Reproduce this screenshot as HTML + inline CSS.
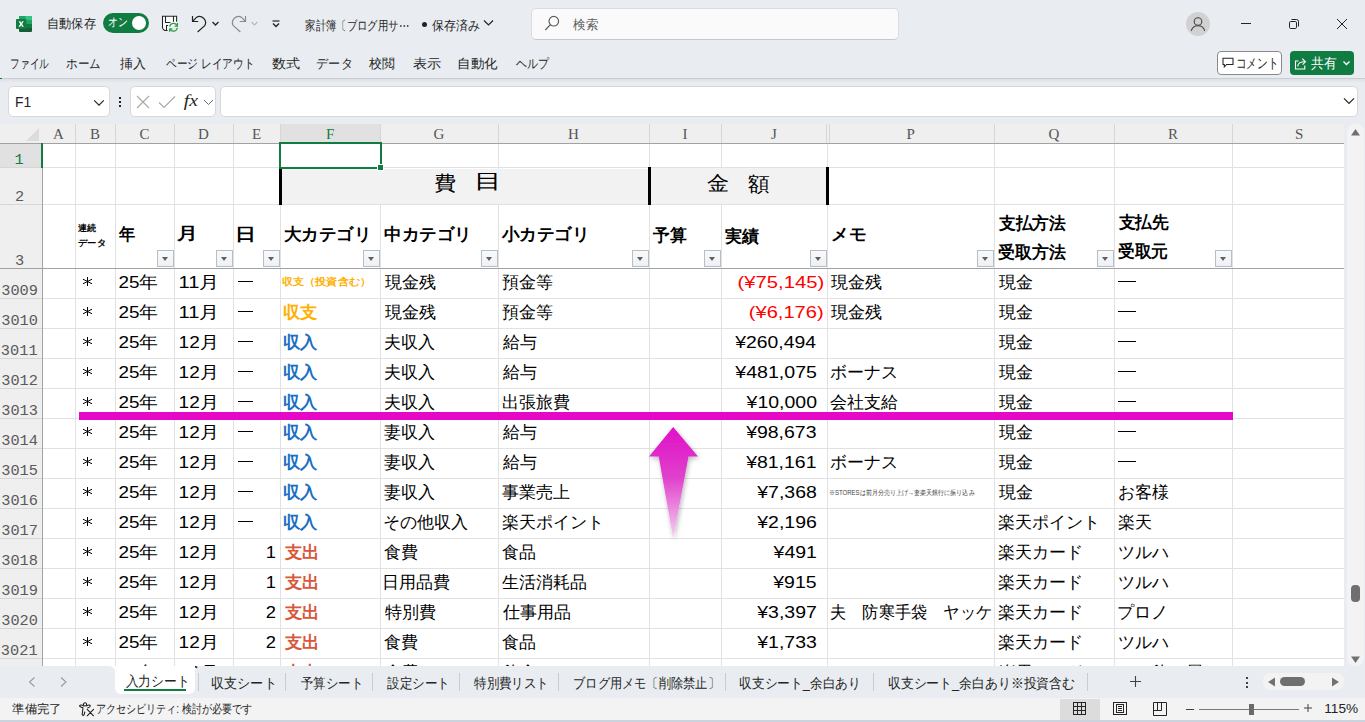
<!DOCTYPE html>
<html lang="ja">
<head>
<meta charset="utf-8">
<title>Excel</title>
<style>
*{box-sizing:border-box}
html,body{margin:0;padding:0}
body{width:1365px;height:722px;overflow:hidden;position:relative;background:#e9edf1;font-family:"Liberation Sans",sans-serif;color:#242424}
.a{position:absolute}
svg text{font-family:"Liberation Sans",sans-serif;white-space:pre}
.fb{position:absolute;top:250px;width:17px;height:17px;background:linear-gradient(#f8f9fb,#eef1f4);border:1px solid #b6bec8}
.fb:after{content:"";position:absolute;left:4px;top:6px;border-left:3.5px solid transparent;border-right:3.5px solid transparent;border-top:4px solid #606060}
</style>
</head>
<body>
<svg class="a" style="left:16px;top:16px" width="16" height="16" viewBox="0 0 16 16">
  <rect x="3" y="0" width="13" height="16" rx="1" fill="#185c37"/>
  <rect x="3" y="0" width="13" height="4" fill="#21a366"/>
  <rect x="9.5" y="0" width="6.5" height="4" fill="#33c481"/>
  <rect x="3" y="4" width="13" height="4" fill="#107c41"/>
  <rect x="9.5" y="4" width="6.5" height="4" fill="#21a366"/>
  <rect x="3" y="8" width="13" height="4" fill="#185c37"/>
  <rect x="9.5" y="8" width="6.5" height="4" fill="#107c41"/>
  <rect x="0" y="3" width="10.3" height="10" rx="0.8" fill="#107c41"/>
  <path d="M2.6 5.2 L4.3 5.2 L5.2 6.9 L6.1 5.2 L7.7 5.2 L6.1 8 L7.8 10.8 L6.1 10.8 L5.1 9.1 L4.2 10.8 L2.5 10.8 L4.3 8 Z" fill="#fff"/>
</svg>
<div class="a" style="left:103px;top:13px;width:46px;height:20px;border-radius:10px;background:#107c41"></div>
<div class="a" style="left:132px;top:16px;width:14px;height:14px;border-radius:7px;background:#fff"></div>
<svg class="a" style="left:161px;top:15px" width="18" height="18" viewBox="0 0 18 18" fill="none">
  <path d="M1.5 1.3 H15.6 V8 L8 15.5 H3.6 L1.5 13.3 Z" fill="#fafafa"/>
  <path d="M1.5 13.3 V1.3 H15.6 V6.8 M1.5 13.3 L3.6 15.5 H6.6 M4.5 1.3 V7.5 H9.4 M12.5 1.3 V6.8 M5.5 15.5 V10.4 H7.2" stroke="#242424" stroke-width="1.05"/>
  <path d="M8.7 11.8 A3.9 3.9 0 0 1 16 10.4 M16.3 12.7 A3.9 3.9 0 0 1 9 14.1" stroke="#2e9e45" stroke-width="1.25"/>
  <path d="M16.4 8.1 V11 H13.6 M8.6 16.7 V13.8 H11.4" stroke="#2e9e45" stroke-width="1.25"/>
</svg>
<svg class="a" style="left:190px;top:15px" width="18" height="18" viewBox="0 0 18 18" fill="none">
  <path d="M2.5 1 V6.5 H8.2" stroke="#242424" stroke-width="1.2"/>
  <path d="M2.5 6.5 L6.2 2.6 A6 6 0 0 1 14.7 10.6 L7.6 17" stroke="#242424" stroke-width="1.2"/>
</svg>
<svg class="a" style="left:211px;top:20px" width="9" height="7" viewBox="0 0 9 7" fill="none"><path d="M1.5 2 L4.5 5 L7.5 2" stroke="#242424" stroke-width="1.3"/></svg>
<svg class="a" style="left:230px;top:15px" width="18" height="18" viewBox="0 0 18 18" fill="none">
  <path d="M15.5 1 V6.5 H9.8" stroke="#8a8a8a" stroke-width="1.2"/>
  <path d="M15.5 6.5 L11.8 2.6 A6 6 0 0 0 3.3 10.6 L10.4 17" stroke="#8a8a8a" stroke-width="1.2"/>
</svg>
<svg class="a" style="left:250px;top:20px" width="9" height="7" viewBox="0 0 9 7" fill="none"><path d="M1.5 2 L4.5 5 L7.5 2" stroke="#b8b8b8" stroke-width="1.1"/></svg>
<svg class="a" style="left:271px;top:19px" width="10" height="10" viewBox="0 0 10 10" fill="none"><path d="M1.5 2 H8.5" stroke="#242424" stroke-width="1.2"/><path d="M2 4.5 L5 7.5 L8 4.5" stroke="#242424" stroke-width="1.4"/></svg>
<div class="a" style="left:422px;top:22px;width:5px;height:5px;border-radius:3px;background:#242424"></div>
<svg class="a" style="left:483px;top:19px" width="11" height="8" viewBox="0 0 11 8" fill="none"><path d="M1 1.5 L5.5 6 L10 1.5" stroke="#242424" stroke-width="1.2"/></svg>
<div class="a" style="left:531px;top:8px;width:368px;height:32px;border-radius:5px;background:#fafafa;border:1px solid #dcdcdc;border-bottom-color:#c8c8c8"></div>
<svg class="a" style="left:544px;top:15px" width="16" height="17" viewBox="0 0 16 17" fill="none"><circle cx="9.8" cy="6.2" r="4.8" stroke="#5c5c5c" stroke-width="1.2"/><path d="M6.4 9.6 L1.3 15" stroke="#5c5c5c" stroke-width="1.3"/></svg>
<div class="a" style="left:1186px;top:12px;width:24px;height:24px;border-radius:12px;background:#d1d1d1"></div>
<svg class="a" style="left:1186px;top:12px" width="24" height="24" viewBox="0 0 24 24" fill="none"><circle cx="12" cy="9.5" r="3.8" stroke="#424242" stroke-width="1.1"/><path d="M5.3 19 C6 15.5 8.5 13.8 12 13.8 C15.5 13.8 18 15.5 18.7 19" stroke="#424242" stroke-width="1.1"/></svg>
<div class="a" style="left:1241px;top:23px;width:10px;height:1px;background:#242424"></div>
<svg class="a" style="left:1288px;top:18px" width="12" height="12" viewBox="0 0 12 12" fill="none"><rect x="1.5" y="3.5" width="7" height="7" rx="1.2" stroke="#242424" stroke-width="1"/><path d="M3.5 1.5 H8.5 A2 2 0 0 1 10.5 3.5 V8.5" stroke="#242424" stroke-width="1"/></svg>
<svg class="a" style="left:1336px;top:18px" width="12" height="12" viewBox="0 0 12 12" fill="none"><path d="M1 1 L11 11 M11 1 L1 11" stroke="#242424" stroke-width="1"/></svg>
<div class="a" style="left:1217px;top:51px;width:65px;height:24px;border-radius:4px;background:#fff;border:1px solid #8a8a8a"></div>
<svg class="a" style="left:1222px;top:57px" width="13" height="12" viewBox="0 0 13 12" fill="none"><path d="M1 1.2 H11 V7.5 H4.6 L2.3 10 V7.5 H1 Z" stroke="#242424" stroke-width="1.05" stroke-linejoin="miter"/></svg>
<div class="a" style="left:1290px;top:51px;width:64px;height:24px;border-radius:4px;background:#107c41"></div>
<svg class="a" style="left:1294px;top:56px" width="14" height="14" viewBox="0 0 14 14" fill="none"><path d="M4.5 5 H1.5 V13 H10.8 V9.5" stroke="#fff" stroke-width="1.1"/><path d="M3.8 10.5 C3.8 7.3 6 5.8 11 5.8" stroke="#fff" stroke-width="1.1"/><path d="M8.3 2.6 L11.4 5.8 L8.6 8.6" stroke="#fff" stroke-width="1.1"/></svg>
<svg class="a" style="left:1342px;top:60px" width="9" height="6" viewBox="0 0 9 6" fill="none"><path d="M1.5 1.5 L4.5 4.5 L7.5 1.5" stroke="#fff" stroke-width="1.4"/></svg>
<div class="a" style="left:0px;top:78px;width:1365px;height:1px;background:#c9ced3"></div>
<div class="a" style="left:0px;top:79px;width:1365px;height:4px;background:linear-gradient(#dde1e5,#e9edf1)"></div>
<div class="a" style="left:0px;top:78px;width:2px;height:1px;background:#107c41"></div>
<div class="a" style="left:8px;top:86px;width:102px;height:31px;border-radius:5px;background:#fff;border:1px solid #d8d8d8"></div>
<svg class="a" style="left:93px;top:99px" width="12" height="8" viewBox="0 0 12 8" fill="none"><path d="M1.2 1.3 L6 6.1 L10.8 1.3" stroke="#242424" stroke-width="1.2"/></svg>
<div class="a" style="left:119px;top:97px;width:2px;height:2px;background:#242424"></div>
<div class="a" style="left:119px;top:101px;width:2px;height:2px;background:#242424"></div>
<div class="a" style="left:119px;top:105px;width:2px;height:2px;background:#242424"></div>
<div class="a" style="left:130px;top:86px;width:86px;height:31px;border-radius:5px;background:#fff;border:1px solid #d8d8d8"></div>
<svg class="a" style="left:136px;top:95px" width="14" height="14" viewBox="0 0 14 14" fill="none"><path d="M1 1 L13 13 M13 1 L1 13" stroke="#a8a8a8" stroke-width="1.1"/></svg>
<svg class="a" style="left:158px;top:95px" width="18" height="14" viewBox="0 0 18 14" fill="none"><path d="M1 7.5 L6 12.5 L17 1.5" stroke="#a8a8a8" stroke-width="1.1"/></svg>
<svg class="a" style="left:203px;top:99px" width="11" height="7" viewBox="0 0 11 7" fill="none"><path d="M1 1 L5.5 5.5 L10 1" stroke="#6a6a6a" stroke-width="1"/></svg>
<div class="a" style="left:220px;top:86px;width:1138px;height:31px;border-radius:5px;background:#fff;border:1px solid #d8d8d8"></div>
<svg class="a" style="left:1343px;top:97px" width="12" height="8" viewBox="0 0 12 8" fill="none"><path d="M1 1.3 L6 6.3 L11 1.3" stroke="#242424" stroke-width="1.2"/></svg>
<svg class="a" style="left:0;top:0" width="1365" height="722" viewBox="0 0 1365 722"><text x="46.86" y="27.70" font-size="13" textLength="48.92" lengthAdjust="spacingAndGlyphs" fill="#242424">自動保存</text>
<text x="108.18" y="26.20" font-size="12" textLength="19.64" lengthAdjust="spacingAndGlyphs" fill="#fff">オン</text>
<text x="305.20" y="29.56" font-size="13" textLength="103.81" lengthAdjust="spacingAndGlyphs" fill="#242424">家計簿〔ブログ用サ⋯</text>
<text x="432.00" y="29.56" font-size="13" textLength="48.02" lengthAdjust="spacingAndGlyphs" fill="#242424">保存済み</text>
<text x="573.00" y="29.00" font-size="13" textLength="25.00" lengthAdjust="spacingAndGlyphs" fill="#5c5c5c">検索</text>
<text x="10.17" y="68.00" font-size="13" textLength="38.89" lengthAdjust="spacingAndGlyphs" fill="#242424">ファイル</text>
<text x="66.20" y="68.00" font-size="13" textLength="34.61" lengthAdjust="spacingAndGlyphs" fill="#242424">ホーム</text>
<text x="119.64" y="68.00" font-size="13" textLength="25.75" lengthAdjust="spacingAndGlyphs" fill="#242424">挿入</text>
<text x="166.00" y="68.00" font-size="13" textLength="88.39" lengthAdjust="spacingAndGlyphs" fill="#242424">ページ レイアウト</text>
<text x="271.66" y="68.00" font-size="13" textLength="28.18" lengthAdjust="spacingAndGlyphs" fill="#242424">数式</text>
<text x="316.35" y="68.00" font-size="13" textLength="36.36" lengthAdjust="spacingAndGlyphs" fill="#242424">データ</text>
<text x="369.36" y="68.00" font-size="13" textLength="25.77" lengthAdjust="spacingAndGlyphs" fill="#242424">校閲</text>
<text x="412.84" y="68.00" font-size="13" textLength="28.17" lengthAdjust="spacingAndGlyphs" fill="#242424">表示</text>
<text x="457.44" y="68.00" font-size="13" textLength="40.52" lengthAdjust="spacingAndGlyphs" fill="#242424">自動化</text>
<text x="516.46" y="68.00" font-size="13" textLength="32.92" lengthAdjust="spacingAndGlyphs" fill="#242424">ヘルプ</text>
<text x="1235.67" y="67.52" font-size="14" textLength="42.70" lengthAdjust="spacingAndGlyphs" fill="#242424">コメント</text>
<text x="1311.20" y="68.00" font-size="14" textLength="25.62" lengthAdjust="spacingAndGlyphs" fill="#fff">共有</text>
<text x="15.00" y="107.30" font-size="14" textLength="16.22" lengthAdjust="spacingAndGlyphs" fill="#242424">F1</text>
<text x="183.70" y="106.00" font-size="17" style="font-family:'Liberation Serif', serif;" font-style="italic" textLength="14.23" lengthAdjust="spacingAndGlyphs" fill="#242424">fx</text></svg>
<div class="a" style="left:0px;top:124px;width:1344px;height:550px;background:#fff"></div>
<div class="a" style="left:0px;top:124px;width:1344px;height:19px;background:#efefef"></div>
<div class="a" style="left:0px;top:143px;width:42px;height:523px;background:#efefef"></div>
<div class="a" style="left:281px;top:124px;width:99px;height:19px;background:#e1e1e1"></div>
<div class="a" style="left:0px;top:144px;width:42px;height:23px;background:#e1e1e1"></div>
<svg class="a" style="left:25px;top:128px" width="14" height="13" viewBox="0 0 14 13"><path d="M14 0 V13 H1 Z" fill="#dcdcdc"/></svg>
<div class="a" style="left:75px;top:124px;width:1px;height:19px;background:#d6d6d6"></div>
<div class="a" style="left:75px;top:144px;width:1px;height:522px;background:#e1e1e1"></div>
<div class="a" style="left:115px;top:124px;width:1px;height:19px;background:#d6d6d6"></div>
<div class="a" style="left:115px;top:144px;width:1px;height:522px;background:#e1e1e1"></div>
<div class="a" style="left:174px;top:124px;width:1px;height:19px;background:#d6d6d6"></div>
<div class="a" style="left:174px;top:144px;width:1px;height:522px;background:#e1e1e1"></div>
<div class="a" style="left:233px;top:124px;width:1px;height:19px;background:#d6d6d6"></div>
<div class="a" style="left:233px;top:144px;width:1px;height:522px;background:#e1e1e1"></div>
<div class="a" style="left:280px;top:124px;width:1px;height:19px;background:#d6d6d6"></div>
<div class="a" style="left:280px;top:144px;width:1px;height:522px;background:#e1e1e1"></div>
<div class="a" style="left:380px;top:124px;width:1px;height:19px;background:#d6d6d6"></div>
<div class="a" style="left:380px;top:144px;width:1px;height:522px;background:#e1e1e1"></div>
<div class="a" style="left:498px;top:124px;width:1px;height:19px;background:#d6d6d6"></div>
<div class="a" style="left:498px;top:144px;width:1px;height:522px;background:#e1e1e1"></div>
<div class="a" style="left:649px;top:124px;width:1px;height:19px;background:#d6d6d6"></div>
<div class="a" style="left:649px;top:144px;width:1px;height:522px;background:#e1e1e1"></div>
<div class="a" style="left:721px;top:124px;width:1px;height:19px;background:#d6d6d6"></div>
<div class="a" style="left:721px;top:144px;width:1px;height:522px;background:#e1e1e1"></div>
<div class="a" style="left:826px;top:124px;width:1px;height:19px;background:#d6d6d6"></div>
<div class="a" style="left:829px;top:124px;width:1px;height:19px;background:#d6d6d6"></div>
<div class="a" style="left:827px;top:144px;width:1px;height:522px;background:#e1e1e1"></div>
<div class="a" style="left:994px;top:124px;width:1px;height:19px;background:#d6d6d6"></div>
<div class="a" style="left:994px;top:144px;width:1px;height:522px;background:#e1e1e1"></div>
<div class="a" style="left:1114px;top:124px;width:1px;height:19px;background:#d6d6d6"></div>
<div class="a" style="left:1114px;top:144px;width:1px;height:522px;background:#e1e1e1"></div>
<div class="a" style="left:1232px;top:124px;width:1px;height:19px;background:#d6d6d6"></div>
<div class="a" style="left:1232px;top:144px;width:1px;height:522px;background:#e1e1e1"></div>
<div class="a" style="left:43px;top:167px;width:1301px;height:1px;background:#e1e1e1"></div>
<div class="a" style="left:0px;top:167px;width:42px;height:1px;background:#d6d6d6"></div>
<div class="a" style="left:43px;top:204px;width:1301px;height:1px;background:#e1e1e1"></div>
<div class="a" style="left:0px;top:204px;width:42px;height:1px;background:#d6d6d6"></div>
<div class="a" style="left:43px;top:268px;width:1301px;height:1px;background:#e1e1e1"></div>
<div class="a" style="left:0px;top:268px;width:42px;height:1px;background:#d6d6d6"></div>
<div class="a" style="left:43px;top:298px;width:1301px;height:1px;background:#e1e1e1"></div>
<div class="a" style="left:0px;top:298px;width:42px;height:1px;background:#d6d6d6"></div>
<div class="a" style="left:43px;top:328px;width:1301px;height:1px;background:#e1e1e1"></div>
<div class="a" style="left:0px;top:328px;width:42px;height:1px;background:#d6d6d6"></div>
<div class="a" style="left:43px;top:358px;width:1301px;height:1px;background:#e1e1e1"></div>
<div class="a" style="left:0px;top:358px;width:42px;height:1px;background:#d6d6d6"></div>
<div class="a" style="left:43px;top:388px;width:1301px;height:1px;background:#e1e1e1"></div>
<div class="a" style="left:0px;top:388px;width:42px;height:1px;background:#d6d6d6"></div>
<div class="a" style="left:43px;top:418px;width:1301px;height:1px;background:#e1e1e1"></div>
<div class="a" style="left:0px;top:418px;width:42px;height:1px;background:#d6d6d6"></div>
<div class="a" style="left:43px;top:448px;width:1301px;height:1px;background:#e1e1e1"></div>
<div class="a" style="left:0px;top:448px;width:42px;height:1px;background:#d6d6d6"></div>
<div class="a" style="left:43px;top:478px;width:1301px;height:1px;background:#e1e1e1"></div>
<div class="a" style="left:0px;top:478px;width:42px;height:1px;background:#d6d6d6"></div>
<div class="a" style="left:43px;top:508px;width:1301px;height:1px;background:#e1e1e1"></div>
<div class="a" style="left:0px;top:508px;width:42px;height:1px;background:#d6d6d6"></div>
<div class="a" style="left:43px;top:538px;width:1301px;height:1px;background:#e1e1e1"></div>
<div class="a" style="left:0px;top:538px;width:42px;height:1px;background:#d6d6d6"></div>
<div class="a" style="left:43px;top:568px;width:1301px;height:1px;background:#e1e1e1"></div>
<div class="a" style="left:0px;top:568px;width:42px;height:1px;background:#d6d6d6"></div>
<div class="a" style="left:43px;top:598px;width:1301px;height:1px;background:#e1e1e1"></div>
<div class="a" style="left:0px;top:598px;width:42px;height:1px;background:#d6d6d6"></div>
<div class="a" style="left:43px;top:628px;width:1301px;height:1px;background:#e1e1e1"></div>
<div class="a" style="left:0px;top:628px;width:42px;height:1px;background:#d6d6d6"></div>
<div class="a" style="left:43px;top:658px;width:1301px;height:1px;background:#e1e1e1"></div>
<div class="a" style="left:0px;top:658px;width:42px;height:1px;background:#d6d6d6"></div>
<div class="a" style="left:0px;top:143px;width:1344px;height:1px;background:#a2a2a2"></div>
<div class="a" style="left:0px;top:268px;width:1344px;height:1px;background:#a2a2a2"></div>
<div class="a" style="left:42px;top:143px;width:1px;height:523px;background:#a2a2a2"></div>
<div class="a" style="left:282px;top:169px;width:366px;height:35px;background:#f2f2f2"></div>
<div class="a" style="left:651px;top:168px;width:175px;height:36px;background:#f2f2f2"></div>
<div class="a" style="left:279px;top:169px;width:3px;height:36px;background:#000"></div>
<div class="a" style="left:648px;top:167px;width:3px;height:38px;background:#000"></div>
<div class="a" style="left:826px;top:167px;width:3px;height:38px;background:#000"></div>
<svg class="a" style="left:0;top:0" width="1365" height="722" viewBox="0 0 1365 722"><text x="53.00" y="138.90" font-size="15" style="font-family:'Liberation Serif', serif;" fill="#555">A</text>
<text x="90.00" y="138.90" font-size="15" style="font-family:'Liberation Serif', serif;" fill="#555">B</text>
<text x="139.50" y="138.90" font-size="15" style="font-family:'Liberation Serif', serif;" fill="#555">C</text>
<text x="198.00" y="138.90" font-size="15" style="font-family:'Liberation Serif', serif;" fill="#555">D</text>
<text x="252.00" y="138.90" font-size="15" style="font-family:'Liberation Serif', serif;" fill="#555">E</text>
<text x="326.00" y="138.90" font-size="15" style="font-family:'Liberation Serif', serif;" fill="#107c41">F</text>
<text x="433.50" y="138.90" font-size="15" style="font-family:'Liberation Serif', serif;" fill="#555">G</text>
<text x="568.00" y="138.90" font-size="15" style="font-family:'Liberation Serif', serif;" fill="#555">H</text>
<text x="682.50" y="138.90" font-size="15" style="font-family:'Liberation Serif', serif;" fill="#555">I</text>
<text x="771.00" y="138.90" font-size="15" style="font-family:'Liberation Serif', serif;" fill="#555">J</text>
<text x="906.50" y="138.90" font-size="15" style="font-family:'Liberation Serif', serif;" fill="#555">P</text>
<text x="1048.50" y="138.90" font-size="15" style="font-family:'Liberation Serif', serif;" fill="#555">Q</text>
<text x="1168.00" y="138.90" font-size="15" style="font-family:'Liberation Serif', serif;" fill="#555">R</text>
<text x="1295.00" y="138.58" font-size="15" style="font-family:'Liberation Serif', serif;" fill="#555">S</text>
<text x="14.61" y="163.60" font-size="15" style="font-family:'Liberation Mono', monospace;" textLength="9.20" lengthAdjust="spacingAndGlyphs" fill="#107c41">1</text>
<text x="15.01" y="200.60" font-size="15" style="font-family:'Liberation Mono', monospace;" textLength="9.20" lengthAdjust="spacingAndGlyphs" fill="#5a5a5a">2</text>
<text x="15.01" y="264.60" font-size="15" style="font-family:'Liberation Mono', monospace;" textLength="9.20" lengthAdjust="spacingAndGlyphs" fill="#5a5a5a">3</text>
<text x="1.24" y="294.60" font-size="15" style="font-family:'Liberation Mono', monospace;" textLength="36.74" lengthAdjust="spacingAndGlyphs" fill="#5a5a5a">3009</text>
<text x="1.24" y="324.60" font-size="15" style="font-family:'Liberation Mono', monospace;" textLength="36.74" lengthAdjust="spacingAndGlyphs" fill="#5a5a5a">3010</text>
<text x="0.84" y="354.60" font-size="15" style="font-family:'Liberation Mono', monospace;" textLength="36.74" lengthAdjust="spacingAndGlyphs" fill="#5a5a5a">3011</text>
<text x="1.24" y="384.60" font-size="15" style="font-family:'Liberation Mono', monospace;" textLength="36.74" lengthAdjust="spacingAndGlyphs" fill="#5a5a5a">3012</text>
<text x="1.24" y="414.60" font-size="15" style="font-family:'Liberation Mono', monospace;" textLength="36.74" lengthAdjust="spacingAndGlyphs" fill="#5a5a5a">3013</text>
<text x="1.24" y="444.60" font-size="15" style="font-family:'Liberation Mono', monospace;" textLength="36.74" lengthAdjust="spacingAndGlyphs" fill="#5a5a5a">3014</text>
<text x="1.24" y="474.60" font-size="15" style="font-family:'Liberation Mono', monospace;" textLength="36.74" lengthAdjust="spacingAndGlyphs" fill="#5a5a5a">3015</text>
<text x="1.24" y="504.60" font-size="15" style="font-family:'Liberation Mono', monospace;" textLength="36.74" lengthAdjust="spacingAndGlyphs" fill="#5a5a5a">3016</text>
<text x="1.24" y="534.60" font-size="15" style="font-family:'Liberation Mono', monospace;" textLength="36.74" lengthAdjust="spacingAndGlyphs" fill="#5a5a5a">3017</text>
<text x="1.24" y="564.60" font-size="15" style="font-family:'Liberation Mono', monospace;" textLength="36.74" lengthAdjust="spacingAndGlyphs" fill="#5a5a5a">3018</text>
<text x="1.24" y="594.60" font-size="15" style="font-family:'Liberation Mono', monospace;" textLength="36.74" lengthAdjust="spacingAndGlyphs" fill="#5a5a5a">3019</text>
<text x="1.24" y="624.60" font-size="15" style="font-family:'Liberation Mono', monospace;" textLength="36.74" lengthAdjust="spacingAndGlyphs" fill="#5a5a5a">3020</text>
<text x="0.84" y="654.60" font-size="15" style="font-family:'Liberation Mono', monospace;" textLength="36.74" lengthAdjust="spacingAndGlyphs" fill="#5a5a5a">3021</text>
<text x="1.24" y="684.60" font-size="15" style="font-family:'Liberation Mono', monospace;" textLength="36.74" lengthAdjust="spacingAndGlyphs" fill="#5a5a5a">3022</text>
<text x="433.79" y="190.40" font-size="20" textLength="22.16" lengthAdjust="spacingAndGlyphs" fill="#000">費</text>
<text x="473.80" y="188.40" font-size="20" textLength="28.01" lengthAdjust="spacingAndGlyphs" fill="#000">目</text>
<text x="706.50" y="190.00" font-size="20" textLength="22.13" lengthAdjust="spacingAndGlyphs" fill="#000">金</text>
<text x="748.40" y="191.00" font-size="20" textLength="21.77" lengthAdjust="spacingAndGlyphs" fill="#000">額</text>
<text x="78.00" y="230.60" font-size="9" font-weight="bold" fill="#000">連続</text>
<text x="78.00" y="245.70" font-size="9" font-weight="bold" textLength="27.85" lengthAdjust="spacingAndGlyphs" fill="#000">データ</text>
<text x="119.20" y="239.80" font-size="17" font-weight="bold" textLength="16.18" lengthAdjust="spacingAndGlyphs" fill="#000">年</text>
<text x="176.60" y="239.00" font-size="17" font-weight="bold" textLength="20.87" lengthAdjust="spacingAndGlyphs" fill="#000">月</text>
<text x="234.73" y="239.70" font-size="17" font-weight="bold" textLength="20.97" lengthAdjust="spacingAndGlyphs" fill="#000">日</text>
<text x="283.70" y="240.20" font-size="17" font-weight="bold" textLength="87.28" lengthAdjust="spacingAndGlyphs" fill="#000">大カテゴリ</text>
<text x="384.10" y="240.20" font-size="17" font-weight="bold" textLength="87.59" lengthAdjust="spacingAndGlyphs" fill="#000">中カテゴリ</text>
<text x="501.60" y="240.20" font-size="17" font-weight="bold" textLength="88.06" lengthAdjust="spacingAndGlyphs" fill="#000">小カテゴリ</text>
<text x="653.30" y="240.50" font-size="17" font-weight="bold" textLength="33.46" lengthAdjust="spacingAndGlyphs" fill="#000">予算</text>
<text x="724.70" y="241.50" font-size="17" font-weight="bold" fill="#000">実績</text>
<text x="830.97" y="239.80" font-size="17" font-weight="bold" textLength="35.10" lengthAdjust="spacingAndGlyphs" fill="#000">メモ</text>
<text x="998.80" y="228.80" font-size="17" font-weight="bold" textLength="66.90" lengthAdjust="spacingAndGlyphs" fill="#000">支払方法</text>
<text x="998.00" y="257.60" font-size="17" font-weight="bold" textLength="67.76" lengthAdjust="spacingAndGlyphs" fill="#000">受取方法</text>
<text x="1118.60" y="228.00" font-size="17" font-weight="bold" textLength="50.19" lengthAdjust="spacingAndGlyphs" fill="#000">支払先</text>
<text x="1117.80" y="256.80" font-size="17" font-weight="bold" textLength="50.21" lengthAdjust="spacingAndGlyphs" fill="#000">受取元</text>
<text x="118.40" y="287.90" font-size="17" textLength="39.87" lengthAdjust="spacingAndGlyphs" fill="#000">25年</text>
<text x="178.52" y="287.90" font-size="17" textLength="40.98" lengthAdjust="spacingAndGlyphs" fill="#000">11月</text>
<text x="281.90" y="285.00" font-size="10" font-weight="bold" textLength="89.03" lengthAdjust="spacingAndGlyphs" fill="#ffb000">収支（投資含む）</text>
<text x="384.70" y="287.90" font-size="17" fill="#000">現金残</text>
<text x="501.70" y="287.90" font-size="17" fill="#000">預金等</text>
<text x="737.50" y="287.90" font-size="17" textLength="86.68" lengthAdjust="spacingAndGlyphs" fill="#ff0000">(¥75,145)</text>
<text x="831.00" y="287.90" font-size="17" fill="#000">現金残</text>
<text x="998.80" y="287.90" font-size="17" fill="#000">現金</text>
<text x="118.40" y="317.90" font-size="17" textLength="39.87" lengthAdjust="spacingAndGlyphs" fill="#000">25年</text>
<text x="178.52" y="317.90" font-size="17" textLength="40.98" lengthAdjust="spacingAndGlyphs" fill="#000">11月</text>
<text x="283.20" y="317.90" font-size="17" font-weight="bold" textLength="34.55" lengthAdjust="spacingAndGlyphs" fill="#ffb000">収支</text>
<text x="384.70" y="317.90" font-size="17" fill="#000">現金残</text>
<text x="501.70" y="317.90" font-size="17" fill="#000">預金等</text>
<text x="748.80" y="317.90" font-size="17" textLength="74.89" lengthAdjust="spacingAndGlyphs" fill="#ff0000">(¥6,176)</text>
<text x="831.00" y="317.90" font-size="17" fill="#000">現金残</text>
<text x="998.80" y="317.90" font-size="17" fill="#000">現金</text>
<text x="118.40" y="347.90" font-size="17" textLength="39.87" lengthAdjust="spacingAndGlyphs" fill="#000">25年</text>
<text x="178.58" y="347.90" font-size="17" textLength="40.16" lengthAdjust="spacingAndGlyphs" fill="#000">12月</text>
<text x="283.20" y="347.90" font-size="17" font-weight="bold" textLength="34.55" lengthAdjust="spacingAndGlyphs" fill="#1a6fc4">収入</text>
<text x="383.70" y="347.90" font-size="17" fill="#000">夫収入</text>
<text x="502.50" y="347.90" font-size="17" fill="#000">給与</text>
<text x="735.30" y="347.90" font-size="17" textLength="80.63" lengthAdjust="spacingAndGlyphs" fill="#000">¥260,494</text>
<text x="998.80" y="347.90" font-size="17" fill="#000">現金</text>
<text x="118.40" y="377.90" font-size="17" textLength="39.87" lengthAdjust="spacingAndGlyphs" fill="#000">25年</text>
<text x="178.58" y="377.90" font-size="17" textLength="40.16" lengthAdjust="spacingAndGlyphs" fill="#000">12月</text>
<text x="283.20" y="377.90" font-size="17" font-weight="bold" textLength="34.55" lengthAdjust="spacingAndGlyphs" fill="#1a6fc4">収入</text>
<text x="383.70" y="377.90" font-size="17" fill="#000">夫収入</text>
<text x="502.50" y="377.90" font-size="17" fill="#000">給与</text>
<text x="735.30" y="377.90" font-size="17" textLength="81.65" lengthAdjust="spacingAndGlyphs" fill="#000">¥481,075</text>
<text x="830.00" y="377.90" font-size="17" fill="#000">ボーナス</text>
<text x="998.80" y="377.90" font-size="17" fill="#000">現金</text>
<text x="118.40" y="407.90" font-size="17" textLength="39.87" lengthAdjust="spacingAndGlyphs" fill="#000">25年</text>
<text x="178.58" y="407.90" font-size="17" textLength="40.16" lengthAdjust="spacingAndGlyphs" fill="#000">12月</text>
<text x="283.20" y="407.90" font-size="17" font-weight="bold" textLength="34.55" lengthAdjust="spacingAndGlyphs" fill="#1a6fc4">収入</text>
<text x="383.70" y="407.90" font-size="17" fill="#000">夫収入</text>
<text x="501.70" y="407.90" font-size="17" fill="#000">出張旅費</text>
<text x="746.61" y="407.90" font-size="17" textLength="70.36" lengthAdjust="spacingAndGlyphs" fill="#000">¥10,000</text>
<text x="830.20" y="407.90" font-size="17" fill="#000">会社支給</text>
<text x="998.80" y="407.90" font-size="17" fill="#000">現金</text>
<text x="118.40" y="437.90" font-size="17" textLength="39.87" lengthAdjust="spacingAndGlyphs" fill="#000">25年</text>
<text x="178.58" y="437.90" font-size="17" textLength="40.16" lengthAdjust="spacingAndGlyphs" fill="#000">12月</text>
<text x="283.20" y="437.90" font-size="17" font-weight="bold" textLength="34.55" lengthAdjust="spacingAndGlyphs" fill="#1a6fc4">収入</text>
<text x="383.90" y="437.90" font-size="17" fill="#000">妻収入</text>
<text x="502.50" y="437.90" font-size="17" fill="#000">給与</text>
<text x="746.15" y="437.90" font-size="17" textLength="70.36" lengthAdjust="spacingAndGlyphs" fill="#000">¥98,673</text>
<text x="998.80" y="437.90" font-size="17" fill="#000">現金</text>
<text x="118.40" y="467.90" font-size="17" textLength="39.87" lengthAdjust="spacingAndGlyphs" fill="#000">25年</text>
<text x="178.58" y="467.90" font-size="17" textLength="40.16" lengthAdjust="spacingAndGlyphs" fill="#000">12月</text>
<text x="283.20" y="467.90" font-size="17" font-weight="bold" textLength="34.55" lengthAdjust="spacingAndGlyphs" fill="#1a6fc4">収入</text>
<text x="383.90" y="467.90" font-size="17" fill="#000">妻収入</text>
<text x="502.50" y="467.90" font-size="17" fill="#000">給与</text>
<text x="746.15" y="467.90" font-size="17" textLength="70.36" lengthAdjust="spacingAndGlyphs" fill="#000">¥81,161</text>
<text x="830.00" y="467.90" font-size="17" fill="#000">ボーナス</text>
<text x="998.80" y="467.90" font-size="17" fill="#000">現金</text>
<text x="118.40" y="497.90" font-size="17" textLength="39.87" lengthAdjust="spacingAndGlyphs" fill="#000">25年</text>
<text x="178.58" y="497.90" font-size="17" textLength="40.16" lengthAdjust="spacingAndGlyphs" fill="#000">12月</text>
<text x="283.20" y="497.90" font-size="17" font-weight="bold" textLength="34.55" lengthAdjust="spacingAndGlyphs" fill="#1a6fc4">収入</text>
<text x="383.90" y="497.90" font-size="17" fill="#000">妻収入</text>
<text x="501.70" y="497.90" font-size="17" fill="#000">事業売上</text>
<text x="757.26" y="497.90" font-size="17" textLength="59.54" lengthAdjust="spacingAndGlyphs" fill="#000">¥7,368</text>
<text x="828.84" y="494.50" font-size="7" textLength="145.73" lengthAdjust="spacingAndGlyphs" fill="#444">※STORESは前月分売り上げ→妻楽天銀行に振り込み</text>
<text x="998.80" y="497.90" font-size="17" fill="#000">現金</text>
<text x="1117.50" y="497.90" font-size="17" fill="#000">お客様</text>
<text x="118.40" y="527.90" font-size="17" textLength="39.87" lengthAdjust="spacingAndGlyphs" fill="#000">25年</text>
<text x="178.58" y="527.90" font-size="17" textLength="40.16" lengthAdjust="spacingAndGlyphs" fill="#000">12月</text>
<text x="283.20" y="527.90" font-size="17" font-weight="bold" textLength="34.55" lengthAdjust="spacingAndGlyphs" fill="#1a6fc4">収入</text>
<text x="382.90" y="527.90" font-size="17" fill="#000">その他収入</text>
<text x="501.70" y="527.90" font-size="17" fill="#000">楽天ポイント</text>
<text x="757.26" y="527.90" font-size="17" textLength="59.54" lengthAdjust="spacingAndGlyphs" fill="#000">¥2,196</text>
<text x="998.00" y="527.90" font-size="17" fill="#000">楽天ポイント</text>
<text x="1117.70" y="527.90" font-size="17" fill="#000">楽天</text>
<text x="118.40" y="557.90" font-size="17" textLength="39.87" lengthAdjust="spacingAndGlyphs" fill="#000">25年</text>
<text x="178.58" y="557.90" font-size="17" textLength="40.16" lengthAdjust="spacingAndGlyphs" fill="#000">12月</text>
<text x="265.68" y="557.90" font-size="17" textLength="10.23" lengthAdjust="spacingAndGlyphs" fill="#000">1</text>
<text x="284.60" y="557.90" font-size="17" font-weight="bold" textLength="34.75" lengthAdjust="spacingAndGlyphs" fill="#d9573a">支出</text>
<text x="383.90" y="557.90" font-size="17" fill="#000">食費</text>
<text x="501.70" y="557.90" font-size="17" fill="#000">食品</text>
<text x="773.63" y="557.90" font-size="17" textLength="43.31" lengthAdjust="spacingAndGlyphs" fill="#000">¥491</text>
<text x="998.00" y="557.90" font-size="17" fill="#000">楽天カード</text>
<text x="1117.50" y="557.90" font-size="17" fill="#000">ツルハ</text>
<text x="118.40" y="587.90" font-size="17" textLength="39.87" lengthAdjust="spacingAndGlyphs" fill="#000">25年</text>
<text x="178.58" y="587.90" font-size="17" textLength="40.16" lengthAdjust="spacingAndGlyphs" fill="#000">12月</text>
<text x="265.68" y="587.90" font-size="17" textLength="10.23" lengthAdjust="spacingAndGlyphs" fill="#000">1</text>
<text x="284.60" y="587.90" font-size="17" font-weight="bold" textLength="34.75" lengthAdjust="spacingAndGlyphs" fill="#d9573a">支出</text>
<text x="381.90" y="587.90" font-size="17" fill="#000">日用品費</text>
<text x="501.70" y="587.90" font-size="17" fill="#000">生活消耗品</text>
<text x="773.29" y="587.90" font-size="17" textLength="43.31" lengthAdjust="spacingAndGlyphs" fill="#000">¥915</text>
<text x="998.00" y="587.90" font-size="17" fill="#000">楽天カード</text>
<text x="1117.50" y="587.90" font-size="17" fill="#000">ツルハ</text>
<text x="118.40" y="617.90" font-size="17" textLength="39.87" lengthAdjust="spacingAndGlyphs" fill="#000">25年</text>
<text x="178.58" y="617.90" font-size="17" textLength="40.16" lengthAdjust="spacingAndGlyphs" fill="#000">12月</text>
<text x="265.68" y="617.90" font-size="17" textLength="10.23" lengthAdjust="spacingAndGlyphs" fill="#000">2</text>
<text x="284.60" y="617.90" font-size="17" font-weight="bold" textLength="34.75" lengthAdjust="spacingAndGlyphs" fill="#d9573a">支出</text>
<text x="384.70" y="617.90" font-size="17" fill="#000">特別費</text>
<text x="502.50" y="617.90" font-size="17" fill="#000">仕事用品</text>
<text x="757.26" y="617.90" font-size="17" textLength="59.54" lengthAdjust="spacingAndGlyphs" fill="#000">¥3,397</text>
<text x="830.05" y="617.90" font-size="17" textLength="161.95" lengthAdjust="spacingAndGlyphs" fill="#000">夫　防寒手袋　ヤッケ</text>
<text x="998.00" y="617.90" font-size="17" fill="#000">楽天カード</text>
<text x="1116.70" y="617.90" font-size="17" fill="#000">プロノ</text>
<text x="118.40" y="647.90" font-size="17" textLength="39.87" lengthAdjust="spacingAndGlyphs" fill="#000">25年</text>
<text x="178.58" y="647.90" font-size="17" textLength="40.16" lengthAdjust="spacingAndGlyphs" fill="#000">12月</text>
<text x="265.68" y="647.90" font-size="17" textLength="10.23" lengthAdjust="spacingAndGlyphs" fill="#000">2</text>
<text x="284.60" y="647.90" font-size="17" font-weight="bold" textLength="34.75" lengthAdjust="spacingAndGlyphs" fill="#d9573a">支出</text>
<text x="383.90" y="647.90" font-size="17" fill="#000">食費</text>
<text x="501.70" y="647.90" font-size="17" fill="#000">食品</text>
<text x="757.26" y="647.90" font-size="17" textLength="59.54" lengthAdjust="spacingAndGlyphs" fill="#000">¥1,733</text>
<text x="998.00" y="647.90" font-size="17" fill="#000">楽天カード</text>
<text x="1117.50" y="647.90" font-size="17" fill="#000">ツルハ</text>
<text x="119.20" y="677.90" font-size="17" textLength="38.62" lengthAdjust="spacingAndGlyphs" fill="#000">25年</text>
<text x="178.59" y="677.90" font-size="17" textLength="39.85" lengthAdjust="spacingAndGlyphs" fill="#000">12月</text>
<text x="265.68" y="677.90" font-size="17" textLength="10.23" lengthAdjust="spacingAndGlyphs" fill="#000">3</text>
<text x="284.60" y="677.90" font-size="17" font-weight="bold" textLength="34.53" lengthAdjust="spacingAndGlyphs" fill="#d9573a">支出</text>
<text x="384.70" y="677.90" font-size="17" fill="#000">食費</text>
<text x="502.50" y="677.90" font-size="17" fill="#000">飲食</text>
<text x="756.46" y="677.90" font-size="17" textLength="59.54" lengthAdjust="spacingAndGlyphs" fill="#000">¥1,760</text>
<text x="998.80" y="677.90" font-size="17" fill="#000">楽天カード</text>
<text x="1117.50" y="677.90" font-size="17" fill="#000">いい飲み屋</text></svg>
<svg class="a" style="left:82px;top:276px" width="11" height="11" viewBox="0 0 11 11" fill="none" stroke="#000" stroke-width="1"><path d="M5.5 1 V10 M1 3.2 L10 7.8 M1 7.8 L10 3.2"/></svg>
<div class="a" style="left:238px;top:281px;width:15px;height:1px;background:#000"></div>
<div class="a" style="left:1118px;top:281px;width:18px;height:1px;background:#000"></div>
<svg class="a" style="left:82px;top:306px" width="11" height="11" viewBox="0 0 11 11" fill="none" stroke="#000" stroke-width="1"><path d="M5.5 1 V10 M1 3.2 L10 7.8 M1 7.8 L10 3.2"/></svg>
<div class="a" style="left:238px;top:311px;width:15px;height:1px;background:#000"></div>
<div class="a" style="left:1118px;top:311px;width:18px;height:1px;background:#000"></div>
<svg class="a" style="left:82px;top:336px" width="11" height="11" viewBox="0 0 11 11" fill="none" stroke="#000" stroke-width="1"><path d="M5.5 1 V10 M1 3.2 L10 7.8 M1 7.8 L10 3.2"/></svg>
<div class="a" style="left:238px;top:341px;width:15px;height:1px;background:#000"></div>
<div class="a" style="left:1118px;top:341px;width:18px;height:1px;background:#000"></div>
<svg class="a" style="left:82px;top:366px" width="11" height="11" viewBox="0 0 11 11" fill="none" stroke="#000" stroke-width="1"><path d="M5.5 1 V10 M1 3.2 L10 7.8 M1 7.8 L10 3.2"/></svg>
<div class="a" style="left:238px;top:371px;width:15px;height:1px;background:#000"></div>
<div class="a" style="left:1118px;top:371px;width:18px;height:1px;background:#000"></div>
<svg class="a" style="left:82px;top:396px" width="11" height="11" viewBox="0 0 11 11" fill="none" stroke="#000" stroke-width="1"><path d="M5.5 1 V10 M1 3.2 L10 7.8 M1 7.8 L10 3.2"/></svg>
<div class="a" style="left:238px;top:401px;width:15px;height:1px;background:#000"></div>
<div class="a" style="left:1118px;top:401px;width:18px;height:1px;background:#000"></div>
<svg class="a" style="left:82px;top:426px" width="11" height="11" viewBox="0 0 11 11" fill="none" stroke="#000" stroke-width="1"><path d="M5.5 1 V10 M1 3.2 L10 7.8 M1 7.8 L10 3.2"/></svg>
<div class="a" style="left:238px;top:431px;width:15px;height:1px;background:#000"></div>
<div class="a" style="left:1118px;top:431px;width:18px;height:1px;background:#000"></div>
<svg class="a" style="left:82px;top:456px" width="11" height="11" viewBox="0 0 11 11" fill="none" stroke="#000" stroke-width="1"><path d="M5.5 1 V10 M1 3.2 L10 7.8 M1 7.8 L10 3.2"/></svg>
<div class="a" style="left:238px;top:461px;width:15px;height:1px;background:#000"></div>
<div class="a" style="left:1118px;top:461px;width:18px;height:1px;background:#000"></div>
<svg class="a" style="left:82px;top:486px" width="11" height="11" viewBox="0 0 11 11" fill="none" stroke="#000" stroke-width="1"><path d="M5.5 1 V10 M1 3.2 L10 7.8 M1 7.8 L10 3.2"/></svg>
<div class="a" style="left:238px;top:491px;width:15px;height:1px;background:#000"></div>
<svg class="a" style="left:82px;top:516px" width="11" height="11" viewBox="0 0 11 11" fill="none" stroke="#000" stroke-width="1"><path d="M5.5 1 V10 M1 3.2 L10 7.8 M1 7.8 L10 3.2"/></svg>
<div class="a" style="left:238px;top:521px;width:15px;height:1px;background:#000"></div>
<svg class="a" style="left:82px;top:546px" width="11" height="11" viewBox="0 0 11 11" fill="none" stroke="#000" stroke-width="1"><path d="M5.5 1 V10 M1 3.2 L10 7.8 M1 7.8 L10 3.2"/></svg>
<svg class="a" style="left:82px;top:576px" width="11" height="11" viewBox="0 0 11 11" fill="none" stroke="#000" stroke-width="1"><path d="M5.5 1 V10 M1 3.2 L10 7.8 M1 7.8 L10 3.2"/></svg>
<svg class="a" style="left:82px;top:606px" width="11" height="11" viewBox="0 0 11 11" fill="none" stroke="#000" stroke-width="1"><path d="M5.5 1 V10 M1 3.2 L10 7.8 M1 7.8 L10 3.2"/></svg>
<svg class="a" style="left:82px;top:636px" width="11" height="11" viewBox="0 0 11 11" fill="none" stroke="#000" stroke-width="1"><path d="M5.5 1 V10 M1 3.2 L10 7.8 M1 7.8 L10 3.2"/></svg>
<svg class="a" style="left:82px;top:666px" width="11" height="11" viewBox="0 0 11 11" fill="none" stroke="#000" stroke-width="1"><path d="M5.5 1 V10 M1 3.2 L10 7.8 M1 7.8 L10 3.2"/></svg>
<div class="fb" style="left:157px"></div>
<div class="fb" style="left:216px"></div>
<div class="fb" style="left:263px"></div>
<div class="fb" style="left:363px"></div>
<div class="fb" style="left:481px"></div>
<div class="fb" style="left:632px"></div>
<div class="fb" style="left:704px"></div>
<div class="fb" style="left:810px"></div>
<div class="fb" style="left:977px"></div>
<div class="fb" style="left:1097px"></div>
<div class="fb" style="left:1215px"></div>
<div class="a" style="left:41px;top:143px;width:2px;height:25px;background:#107c41"></div>
<div class="a" style="left:279px;top:142px;width:103px;height:27px;border:2px solid #107c41"></div>
<div class="a" style="left:377px;top:164px;width:7px;height:7px;background:#fff"></div>
<div class="a" style="left:378px;top:165px;width:5px;height:5px;background:#107c41"></div>
<div class="a" style="left:79px;top:412px;width:1154px;height:8px;background:#e400c4;opacity:0.97"></div>
<svg class="a" style="left:630px;top:415px" width="90" height="140" viewBox="630 415 90 140">
<defs><linearGradient id="ag" x1="0" y1="0" x2="0" y2="1"><stop offset="0" stop-color="#e010c8"/><stop offset="0.45" stop-color="#e040cc"/><stop offset="1" stop-color="#f6d2ef"/></linearGradient>
<filter id="sh" x="-30%" y="-30%" width="160%" height="160%"><feGaussianBlur in="SourceAlpha" stdDeviation="2.5"/><feOffset dx="1" dy="2"/><feComponentTransfer><feFuncA type="linear" slope="0.3"/></feComponentTransfer><feMerge><feMergeNode/><feMergeNode in="SourceGraphic"/></feMerge></filter></defs>
<path d="M673.2 427 L698 456.4 L688.5 456.4 L673.2 538.6 L658.7 456.4 L649 456.4 Z" fill="url(#ag)" filter="url(#sh)"/>
</svg>
<div class="a" style="left:1344px;top:124px;width:21px;height:542px;background:#e9edf1"></div>
<div class="a" style="left:1347px;top:124px;width:17px;height:542px;border-radius:8px;background:#f3f3f3"></div>
<svg class="a" style="left:1350px;top:128px" width="11" height="9" viewBox="0 0 11 9"><path d="M5.5 1 L10 7.5 H1 Z" fill="#717171"/></svg>
<svg class="a" style="left:1350px;top:655px" width="11" height="9" viewBox="0 0 11 9"><path d="M5.5 8 L10 1.5 H1 Z" fill="#717171"/></svg>
<div class="a" style="left:1351px;top:585px;width:9px;height:17px;border-radius:4px;background:#6f6f6f"></div>
<div class="a" style="left:0;top:666px;width:115px;height:32px;background:#e9edf1;border-top-right-radius:6px"></div>
<div class="a" style="left:195px;top:666px;width:1170px;height:32px;background:#e9edf1;border-top-left-radius:6px"></div>
<div class="a" style="left:115px;top:666px;width:80px;height:32px;background:#e9edf1"></div>
<div class="a" style="left:115px;top:666px;width:80px;height:28px;background:#fff;border-radius:0 0 6px 6px"></div>
<div class="a" style="left:124px;top:689px;width:62px;height:2px;background:#107c41"></div>
<svg class="a" style="left:26px;top:675px" width="44" height="14" viewBox="0 0 44 14" fill="none" stroke="#9a9a9a" stroke-width="1.1"><path d="M8.5 2.5 L3.5 7 L8.5 11.5"/><path d="M35 2.5 L40 7 L35 11.5"/></svg>
<div class="a" style="left:198px;top:673px;width:1px;height:18px;background:#c9cdd2"></div>
<div class="a" style="left:285px;top:673px;width:1px;height:18px;background:#c9cdd2"></div>
<div class="a" style="left:372px;top:673px;width:1px;height:18px;background:#c9cdd2"></div>
<div class="a" style="left:459px;top:673px;width:1px;height:18px;background:#c9cdd2"></div>
<div class="a" style="left:558px;top:673px;width:1px;height:18px;background:#c9cdd2"></div>
<div class="a" style="left:725px;top:673px;width:1px;height:18px;background:#c9cdd2"></div>
<div class="a" style="left:873px;top:673px;width:1px;height:18px;background:#c9cdd2"></div>
<div class="a" style="left:1087px;top:673px;width:1px;height:18px;background:#c9cdd2"></div>
<svg class="a" style="left:1129px;top:675px" width="13" height="13" viewBox="0 0 13 13" fill="none" stroke="#424242" stroke-width="1.1"><path d="M6.5 1 V12 M1 6.5 H12"/></svg>
<div class="a" style="left:1246px;top:677px;width:2px;height:2px;background:#424242"></div>
<div class="a" style="left:1246px;top:682px;width:2px;height:2px;background:#424242"></div>
<div class="a" style="left:1246px;top:686px;width:2px;height:2px;background:#424242"></div>
<div class="a" style="left:1263px;top:673px;width:81px;height:17px;border-radius:8px;background:#f3f3f3"></div>
<svg class="a" style="left:1266px;top:676px" width="76" height="12" viewBox="0 0 76 12"><path d="M9 1.5 V10.5 L2 6 Z" fill="#717171"/><path d="M66 1.5 V10.5 L73 6 Z" fill="#717171"/></svg>
<div class="a" style="left:1280px;top:677px;width:25px;height:9px;border-radius:5px;background:#6f6f6f"></div>
<div class="a" style="left:0;top:698px;width:1365px;height:22px;background:#f3f3f3"></div>
<div class="a" style="left:0;top:720px;width:1365px;height:2px;background:#cad3de"></div>
<div class="a" style="left:1060px;top:699px;width:40px;height:21px;background:#dcdcdc"></div>
<svg class="a" style="left:1072px;top:701px" width="16" height="16" viewBox="0 0 16 16" fill="none" stroke="#242424" stroke-width="1"><rect x="1.5" y="1.5" width="12" height="12"/><path d="M5.5 1.5 V13.5 M9.5 1.5 V13.5 M1.5 5.5 H13.5 M1.5 9.5 H13.5"/></svg>
<svg class="a" style="left:1112px;top:702px" width="16" height="16" viewBox="0 0 16 16" fill="none" stroke="#242424" stroke-width="1"><rect x="1.5" y="0.5" width="13" height="12"/><rect x="4.5" y="2.5" width="7" height="8"/><path d="M6 4.5 H10 M6 6.5 H10 M6 8.5 H10"/></svg>
<svg class="a" style="left:1152px;top:701px" width="16" height="16" viewBox="0 0 16 16" fill="none" stroke="#242424" stroke-width="1"><path d="M1.5 1.5 H14.5 V14.5 H1.5 Z M1.5 9.5 H9.5 V1.5 M5.5 1.5 V9.5"/></svg>
<div class="a" style="left:1186px;top:709px;width:8px;height:1px;background:#424242"></div>
<div class="a" style="left:1199px;top:709px;width:100px;height:1px;background:#7a7a7a"></div>
<div class="a" style="left:1249px;top:704px;width:5px;height:11px;background:#6a6a6a"></div>
<svg class="a" style="left:1303px;top:703px" width="10" height="10" viewBox="0 0 10 10" fill="none" stroke="#424242" stroke-width="1"><path d="M5 1 V9 M1 5 H9"/></svg>
<svg class="a" style="left:78px;top:701px" width="17" height="17" viewBox="0 0 17 17" fill="none" stroke="#1a1a1a" stroke-width="1.05" stroke-linecap="round"><circle cx="7" cy="3.4" r="1.6"/><path d="M5.4 4.9 C4.2 4 1.7 3.6 1.7 5.1 C1.7 6.1 3.3 6.4 4.9 6.7 C4.9 9.2 4.5 11.2 4.2 13 C4 14.7 5.9 14.8 6.2 13.3 L6.8 11"/><path d="M8.6 4.9 C9.8 4 12.3 3.6 12.3 5.1 C12.3 6 11 6.5 9.6 6.9"/><path d="M9.2 8.4 L15.5 14.8 M15.5 8.4 L9.2 14.8"/></svg>
<svg class="a" style="left:0;top:0" width="1365" height="722" viewBox="0 0 1365 722"><text x="125.70" y="685.70" font-size="14" textLength="63.77" lengthAdjust="spacingAndGlyphs" fill="#242424">入力シート</text>
<text x="211.20" y="687.60" font-size="14" textLength="65.46" lengthAdjust="spacingAndGlyphs" fill="#242424">収支シート</text>
<text x="301.00" y="687.60" font-size="14" textLength="62.30" lengthAdjust="spacingAndGlyphs" fill="#242424">予算シート</text>
<text x="387.40" y="687.60" font-size="14" textLength="62.61" lengthAdjust="spacingAndGlyphs" fill="#242424">設定シート</text>
<text x="474.10" y="687.60" font-size="14" textLength="74.73" lengthAdjust="spacingAndGlyphs" fill="#242424">特別費リスト</text>
<text x="573.23" y="687.60" font-size="14" textLength="146.54" lengthAdjust="spacingAndGlyphs" fill="#242424">ブログ用メモ〔削除禁止〕</text>
<text x="739.30" y="687.60" font-size="14" textLength="121.38" lengthAdjust="spacingAndGlyphs" fill="#242424">収支シート_余白あり</text>
<text x="887.80" y="687.60" font-size="14" textLength="187.25" lengthAdjust="spacingAndGlyphs" fill="#242424">収支シート_余白あり※投資含む</text>
<text x="12.30" y="712.60" font-size="12" textLength="49.44" lengthAdjust="spacingAndGlyphs" fill="#242424">準備完了</text>
<text x="95.86" y="712.60" font-size="12" textLength="156.33" lengthAdjust="spacingAndGlyphs" fill="#242424">アクセシビリティ: 検討が必要です</text>
<text x="1324.25" y="713.00" font-size="13" textLength="33.85" lengthAdjust="spacingAndGlyphs" fill="#242424">115%</text></svg>
</body>
</html>
